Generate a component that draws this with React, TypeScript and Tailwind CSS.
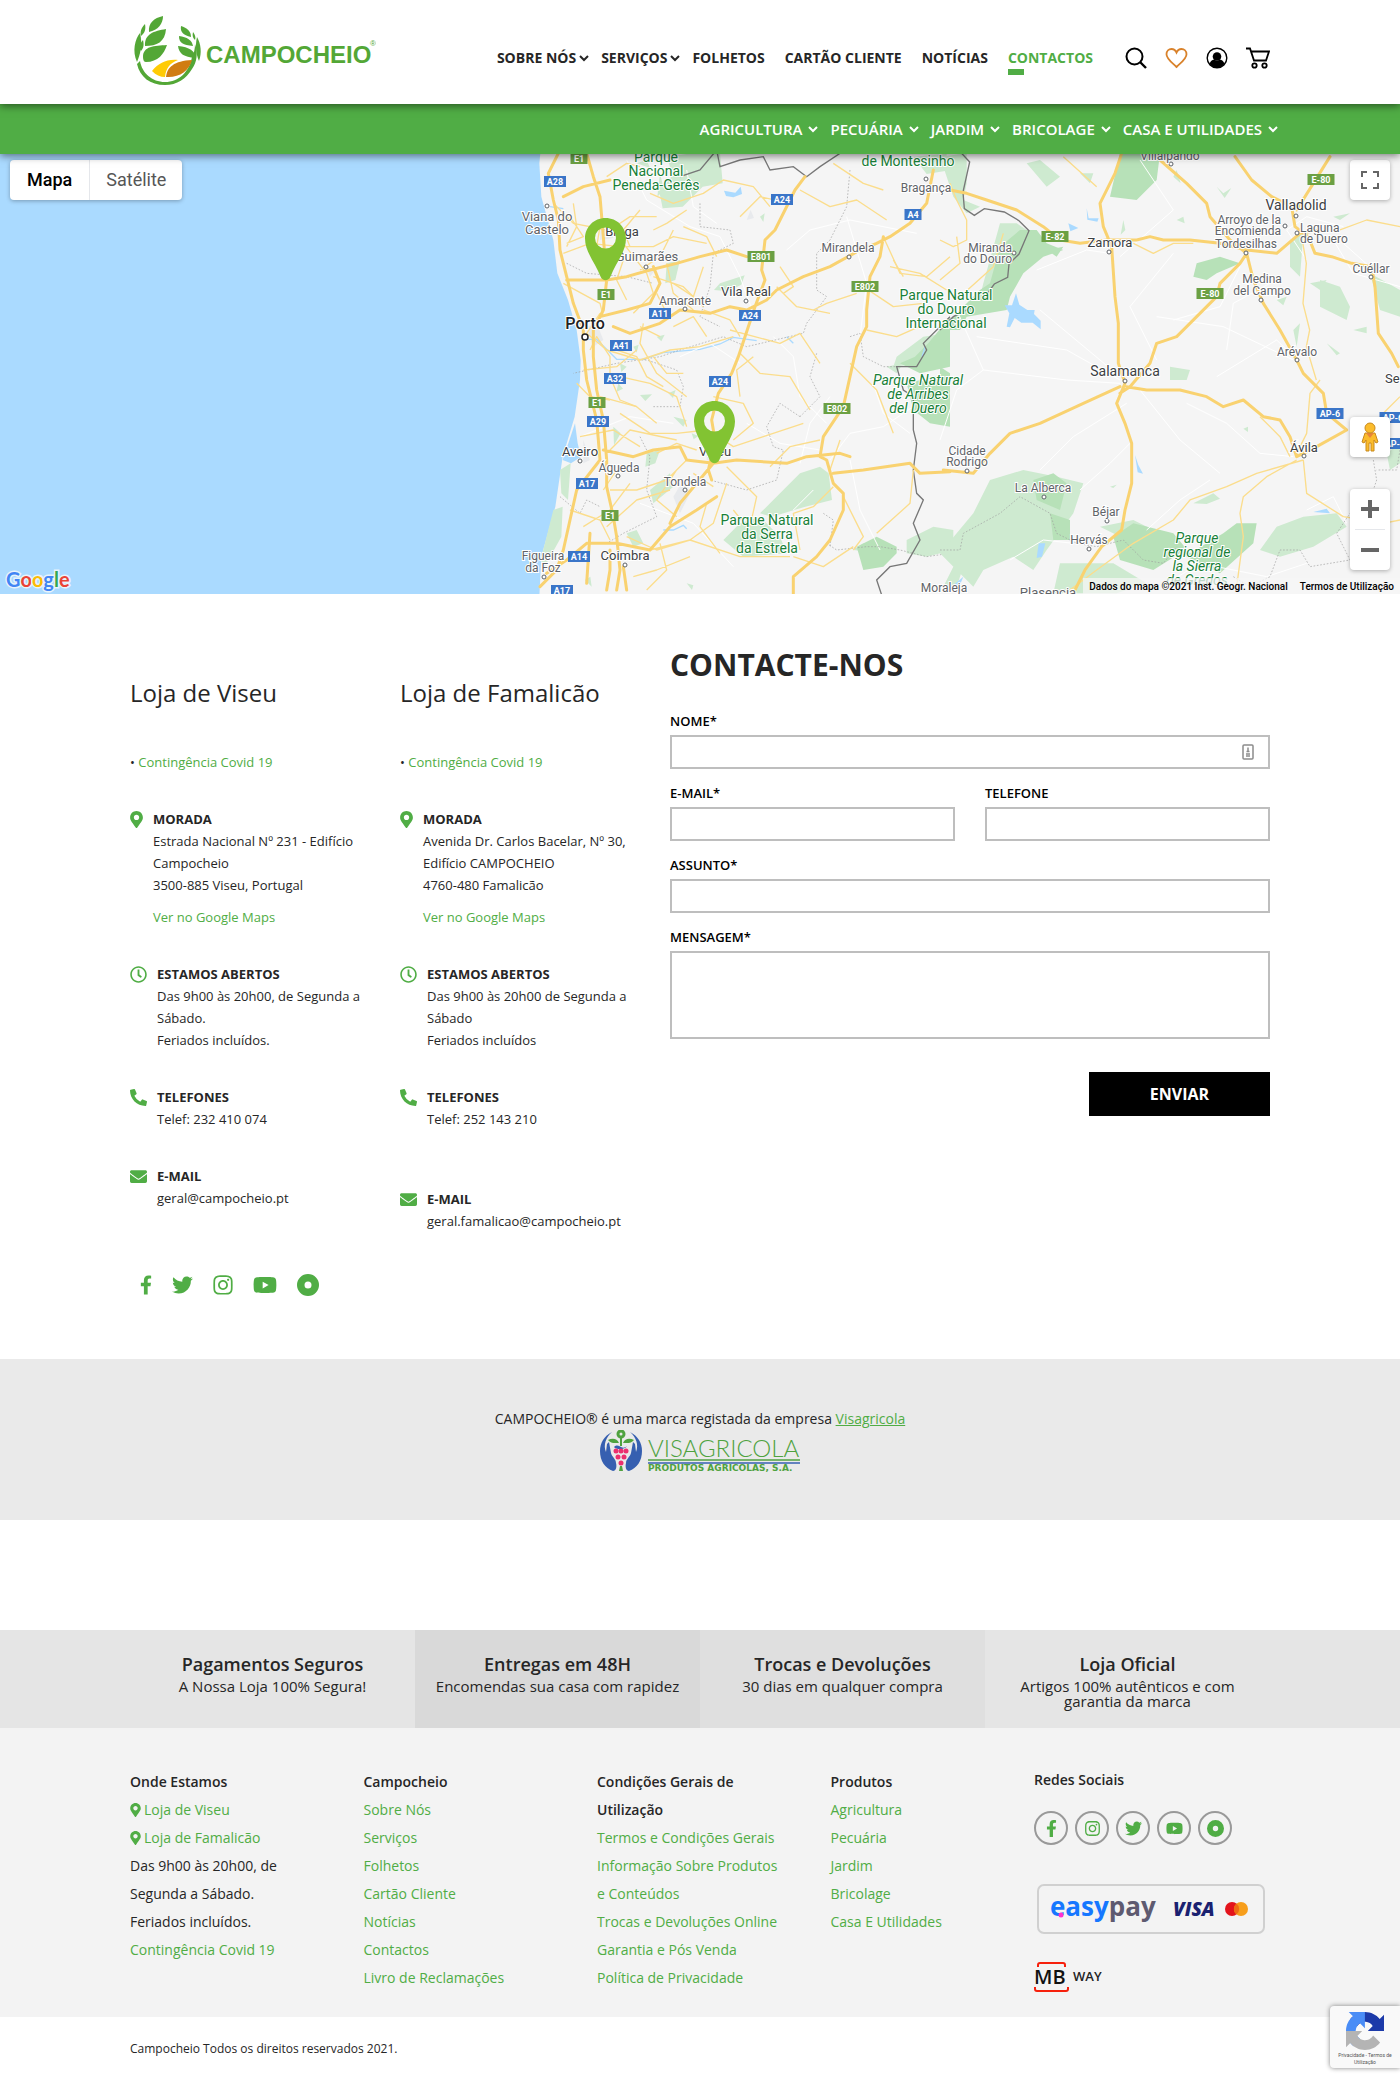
import { useState } from "react";
import type { ReactNode } from "react";
import {
    FaEnvelope,
    FaFacebookF,
    FaInstagram,
    FaMapMarkerAlt,
    FaPhoneAlt,
    FaRegClock,
    FaTwitter,
    FaYoutube,
} from "react-icons/fa";

const mainNav = [
    { label: "SOBRE NÓS", menu: true },
    { label: "SERVIÇOS", menu: true },
    { label: "FOLHETOS" },
    { label: "CARTÃO CLIENTE" },
    { label: "NOTÍCIAS" },
    { label: "CONTACTOS", active: true },
];

const categories = ["AGRICULTURA", "PECUÁRIA", "JARDIM", "BRICOLAGE", "CASA E UTILIDADES"];

function Chevron() {
    return (
        <svg width="10" height="7" viewBox="0 0 10 7" fill="none" stroke="currentColor" strokeWidth="2" aria-hidden="true">
            <path d="M1 1l4 4 4-4" />
        </svg>
    );
}

function Logo() {
    return (
        <svg width="246" height="74" viewBox="0 0 246 74" role="img" aria-label="Campocheio">
            <g fill="#53a736">
                <path d="M10 49c2 12 12 21 25 21 14 0 24-10 27-25 2-4 3-8 3-13 3 9 2 18-3 25-6 10-15 16-27 16C20 73 10 65 7 52z" />
                <path d="M33 4c-9 2-15 7-14 16 9-2 14-8 14-16z" />
                <path d="M36 17c-12 2-22 5-21 17 12 0 20-4 21-17z" />
                <path d="M37 33c-13 1-24 1-24 12 0 3 1 5 3 5 12 0 18-8 21-17z" />
                <path d="M15 12c-4 4-5 8-4 12 4-3 5-7 4-12zM10 21c-5 6-8 18-3 29 3-7 6-17 3-29zM13 28c-3 3-3 7-2 11 3-3 3-7 2-11z" />
                <path d="M51 14c-1 6 2 9 10 11 0-6-4-9-10-11z" />
                <path d="M49 24c0 7 4 9 14 10-1-6-6-9-14-10z" />
                <path d="M48 34c1 8 6 11 17 12 1-7-6-11-17-12z" />
                <path d="M63 20c2 3 3 5 2 8-2-2-3-4-2-8zM67 25c4 7 5 16 2 24-3-7-4-15-2-24z" />
            </g>
            <path d="M22 59c7-8 14-12 26-11-8 3-12 8-13 17-5 0-9-2-13-6z" fill="#ffcb05" />
            <path d="M36 65c1-10 8-16 26-17-3 11-13 18-26 17z" fill="#d07c12" />
            <text x="76" y="51" fontFamily="Liberation Sans, Arial, sans-serif" fontWeight="700" fontSize="24" fill="#53a736">
                CAMPOCHEIO
            </text>
            <text x="240" y="34" fontFamily="Liberation Sans, Arial, sans-serif" fontSize="8" fill="#53a736">
                ®
            </text>
        </svg>
    );
}

function SiteHeader() {
    return (
        <header className="relative z-20">
            <div className="relative z-10 bg-white shadow-[0_2px_8px_rgba(0,0,0,0.5)]">
                <div className="mx-auto flex h-[104px] max-w-[1140px] items-center justify-between">
                    <a href="#" className="pb-1.5">
                        <Logo />
                    </a>
                    <div className="flex items-center gap-8 pt-3">
                        <nav className="flex gap-5 text-sm leading-5 font-bold">
                            {mainNav.map((item) => (
                                <a
                                    key={item.label}
                                    href="#"
                                    className={
                                        item.active
                                            ? "relative text-[#50ad45] after:absolute after:top-[21px] after:left-0 after:h-1.5 after:w-4 after:bg-[#50ad45]"
                                            : item.menu
                                              ? "-mr-2 flex items-center gap-[3px]"
                                              : ""
                                    }
                                >
                                    {item.label}
                                    {item.menu && <Chevron />}
                                </a>
                            ))}
                        </nav>
                        <div className="flex items-center gap-[18px] text-black">
                            <button type="button" aria-label="Pesquisar">
                                <svg width="22" height="22" viewBox="0 0 22 22" fill="none" stroke="currentColor" strokeWidth="2">
                                    <circle cx="9.5" cy="9.5" r="8" />
                                    <path d="M15 15l6 6" strokeWidth="2.4" />
                                </svg>
                            </button>
                            <a href="#" aria-label="Favoritos">
                                <svg width="23" height="22" viewBox="0 0 23 22" fill="none" stroke="#d9822b" strokeWidth="1.8">
                                    <path d="M11.5 20C7 15.500 1.500 12 1.500 7.300 1.500 4 3.800 2 6.500 2c2.300 0 4 1.300 5 3.600C12.500 3.300 14.200 2 16.500 2c2.700 0 5 2 5 5.300 0 4.700-5.500 8.200-10 12.700z" />
                                </svg>
                            </a>
                            <a href="#" aria-label="Conta">
                                <svg width="22" height="22" viewBox="0 0 22 22">
                                    <circle cx="11" cy="11" r="9.800" fill="none" stroke="currentColor" strokeWidth="1.400" />
                                    <circle cx="11" cy="9.500" r="4.300" fill="currentColor" />
                                    <path d="M3.500 17c1-3 2.500-4 4.500-4.500 2 1.500 4 1.500 6 0 2 .5 3.500 1.500 4.500 4.500-4 5-11 5-15 0z" fill="currentColor" />
                                </svg>
                            </a>
                            <a href="#" aria-label="Carrinho">
                                <svg width="24" height="22" viewBox="0 0 24 22" fill="none" stroke="currentColor" strokeWidth="1.800">
                                    <path d="M0 1.500h4l4 12h12l3-9H5" />
                                    <circle cx="8.500" cy="18.500" r="2.200" />
                                    <circle cx="18.500" cy="18.500" r="2.200" />
                                </svg>
                            </a>
                        </div>
                    </div>
                </div>
            </div>
            <div className="bg-[#50ad45] shadow-[0_2px_8px_rgba(0,0,0,0.5)]">
                <nav className="mx-auto flex h-[50px] max-w-[1140px] items-center justify-end text-[15px] font-semibold text-white">
                    <div className="-mr-2 flex gap-3">
                        {categories.map((label) => (
                            <a key={label} href="#" className="flex items-center gap-1.5">
                                {label}
                                <Chevron />
                            </a>
                        ))}
                    </div>
                </nav>
            </div>
        </header>
    );
}

type Label = {
    x: number;
    y: number;
    lines: string[];
    size: number;
    step?: number;
    color?: string;
    anchor?: "start" | "middle" | "end";
    italic?: boolean;
    weight?: number;
};

const park = "#188038";
const town = "#5f6368";

const mapLabels: Label[] = [
    { x: 656, y: 8, lines: ["Parque", "Nacional", "Peneda-Gerês"], size: 14, step: 14, color: park },
    { x: 908, y: 12, lines: ["de Montesinho"], size: 14, color: park },
    { x: 946, y: 146, lines: ["Parque Natural", "do Douro", "Internacional"], size: 14, step: 14, color: park },
    { x: 918, y: 231, lines: ["Parque Natural", "de Arribes", "del Duero"], size: 14, step: 14, color: park, italic: true },
    { x: 767, y: 371, lines: ["Parque Natural", "da Serra", "da Estrela"], size: 14, step: 14, color: park },
    { x: 1197, y: 389, lines: ["Parque", "regional de", "la Sierra", "de Gredos"], size: 14, step: 14, color: park, italic: true },
    { x: 926, y: 38, lines: ["Bragança"], size: 12, color: town },
    { x: 547, y: 67, lines: ["Viana do", "Castelo"], size: 13, step: 13, color: town },
    { x: 622, y: 82, lines: ["Braga"], size: 13 },
    { x: 647, y: 107, lines: ["Guimarães"], size: 13, color: town },
    { x: 685, y: 151, lines: ["Amarante"], size: 12, color: town },
    { x: 746, y: 142, lines: ["Vila Real"], size: 13 },
    { x: 585, y: 175, lines: ["Porto"], size: 16, color: "#202124", weight: 500 },
    { x: 848, y: 98, lines: ["Mirandela"], size: 12, color: town },
    { x: 715, y: 302, lines: ["Viseu"], size: 13 },
    { x: 580, y: 302, lines: ["Aveiro"], size: 13 },
    { x: 619, y: 318, lines: ["Águeda"], size: 12, color: town },
    { x: 685, y: 332, lines: ["Tondela"], size: 12, color: town },
    { x: 543, y: 406, lines: ["Figueira", "da Foz"], size: 12, step: 12, color: town },
    { x: 625, y: 406, lines: ["Coimbra"], size: 13 },
    { x: 944, y: 438, lines: ["Moraleja"], size: 12, color: town },
    { x: 1170, y: 6, lines: ["Villalpando"], size: 12, color: town },
    { x: 1296, y: 56, lines: ["Valladolid"], size: 14 },
    { x: 1281, y: 70, lines: ["Arroyo de la", "Encomienda"], size: 12, step: 11, color: town, anchor: "end" },
    { x: 1300, y: 78, lines: ["Laguna", "de Duero"], size: 12, step: 11, color: town, anchor: "start" },
    { x: 1246, y: 94, lines: ["Tordesilhas"], size: 12, color: town },
    { x: 1110, y: 93, lines: ["Zamora"], size: 13 },
    { x: 1012, y: 98, lines: ["Miranda", "do Douro"], size: 12, step: 11, color: town, anchor: "end" },
    { x: 1371, y: 119, lines: ["Cuéllar"], size: 12, color: town },
    { x: 1262, y: 129, lines: ["Medina", "del Campo"], size: 12, step: 12, color: town },
    { x: 1297, y: 202, lines: ["Arévalo"], size: 12, color: town },
    { x: 1125, y: 222, lines: ["Salamanca"], size: 14 },
    { x: 1385, y: 229, lines: ["Se"], size: 13, anchor: "start" },
    { x: 1304, y: 298, lines: ["Ávila"], size: 13 },
    { x: 967, y: 301, lines: ["Cidade", "Rodrigo"], size: 12, step: 11, color: town },
    { x: 1043, y: 338, lines: ["La Alberca"], size: 12, color: town },
    { x: 1106, y: 362, lines: ["Béjar"], size: 12, color: town },
    { x: 1089, y: 390, lines: ["Hervás"], size: 12, color: town },
    { x: 1048, y: 443, lines: ["Plasencia"], size: 13, color: town },
];

const mapTowns = [
    [926, 25], [547, 52], [646, 113], [685, 155], [746, 147], [849, 103], [580, 307], [618, 322],
    [685, 336], [544, 423], [625, 411], [1171, 10], [1296, 62], [1285, 72], [1297, 79], [1246, 99],
    [1109, 98], [1014, 99], [1371, 123], [1261, 146], [1297, 206], [1125, 227], [1304, 302],
    [967, 317], [1044, 343], [1107, 367], [1089, 395],
];

const shields = [
    { x: 555, y: 27, t: "A28" }, { x: 782, y: 45, t: "A24" }, { x: 913, y: 60, t: "A4" },
    { x: 750, y: 161, t: "A24" }, { x: 660, y: 159, t: "A11" }, { x: 621, y: 191, t: "A41" },
    { x: 615, y: 224, t: "A32" }, { x: 720, y: 227, t: "A24" }, { x: 598, y: 267, t: "A29" },
    { x: 587, y: 329, t: "A17" }, { x: 579, y: 402, t: "A14" }, { x: 562, y: 436, t: "A17" },
    { x: 1330, y: 259, t: "AP-6" }, { x: 1393, y: 263, t: "AP-6" }, { x: 1395, y: 289, t: "AP-6" },
    { x: 579, y: 4, t: "E1", green: true }, { x: 606, y: 140, t: "E1", green: true },
    { x: 597, y: 248, t: "E1", green: true }, { x: 610, y: 361, t: "E1", green: true },
    { x: 761, y: 102, t: "E801", green: true }, { x: 865, y: 132, t: "E802", green: true },
    { x: 837, y: 254, t: "E802", green: true }, { x: 1321, y: 25, t: "E-80", green: true },
    { x: 1055, y: 82, t: "E-82", green: true }, { x: 1210, y: 139, t: "E-80", green: true },
];

// West and east halves are drawn on 3x grids with their own origins.
function MapTerrain() {
    return (
        <>
            <g transform="translate(500 -4) scale(.33333)">
                <path d="M-1500 0H122l-4 40 6 100 36 130 12 100 32 80 26 90 12 90-2 60-16 110-36 120-22 150-42 150-6 120H-1500z" fill="#aadaff" />
                <path d="M205 880l20-60 8 60 10 40-30 20-25-10z" fill="#aadaff" />
                <path d="M672 122l34 6 16-18 4 22-26 10-22-4z" fill="#aadaff" />
                <g fill="#ceead0">
                    <path d="M500 20l60-8 100-2 8 90-60 10-60 60-60 5-10-50 40-50z" />
                    <path d="M660 400l74-24-10 28-40 20-42-4zM500 340l40-10-14 60-30 10zM410 40l30-10 10 24zM180 960l32-20-8 110-20-20z" />
                    <path d="M160 1080l28-10-4 90-50 90-12-20zM780 1090l120-120 60-20 26 20 10 80-80 20-100 30zM720 1120l60-20 60 60 20 50-130 10-60-50z" />
                    <path d="M440 910l40-10-14 40-30 10zM450 1020l60-50 10 40-60 50zM340 830l22 20-20 36zM420 735l36-2-20 20zM520 800l40 10-10 20zM1190 620l80-60 70-10 10 70-80 20-90 10zM1160 650l50-10-20 30z" />
                    <path d="M1220 1170l80-40 60 10v60l-80 20-60-10zM1060 1200l30-20 60 30zM380 1150l30-10 20 40-30 10zM255 1290l16-10 4 30zM560 1300l20 6-4 14z" />
                    <path d="M400 590l16-6-6 24zM470 560l24-6-10 20zM360 640l20 10-16 16zM780 200l14-10-4 26zM575 850l20 8-14 10zM355 700l14 16-20 10zM505 730l22-10-8 24zM1240 20l100-8 0 50-60 10zM480 70l12 50-20 20z" />
                </g>
                <g fill="#b7e1b8">
                    <path d="M1245 620l40-40 65-80v150l-90 20-60-30zM1220 700l130-30v160l-60-10-50-40zM1070 1190l60-30 60 30v20l-40 40-60 10z" />
                </g>
                <g fill="#e8eaed">
                    <path d="M260 530l30-10 20 50-30 20zM520 1040l30-50 20 40-30 60zM250 870l20 60-20 10zM440 350l26 10-16 20zM300 240l30-6 10 30-40 6zM620 900l40-4-10 40-30-6zM740 210l12-30 10 24z" />
                </g>
                <g fill="none" stroke="#aadaff" strokeWidth="4">
                    <path d="M250 568l40 0 60 60 80 0 60-20 110-10 60-16 40-20 70 10M490 1140l30 0 30-14 10 10M860 560l20 20M1266 620l10-30M150 170l40 6" />
                </g>
                <g fill="none" stroke="#fff" strokeWidth="3">
                    <path d="M380 30l60 120 130 80 90 30 60 120 40 110M860 300l70-60 120-30 200 40M820 560l60 60 20 120 80 80M740 820l100 60 120 20M240 860l150-60 130 20M1040 200l60 200-20 160M900 940l30-120 60-80M420 1060l160 60 120 130M1050 930l30 150 60 120M540 620l90-40 90 60M1240 770l-90 60-100 20-60 80M1120 700l30 90 80 60M560 60l20 110 70 50M880 1080l60-60" />
                </g>
                <g fill="none" stroke="#9e9e9e" strokeWidth="2" strokeDasharray="5 5">
                    <path d="M600 160v70l90 10 10 40-60 30-10 100-30 90 60 30M1050 60l-10 110-50 100-40 40v110l30 20-60 80-10 30-170 40-70-30-130 40-60 20-130 20-130 30M1050 560l30-10 10 70 60 30 40 0M200 340l60 30 120 10 80 20M460 770l80 0 10-60-20-50-90-30-30 0M900 800l-60-40-40 70 20 60 30 10-20 90-90 30-110-30M420 860l30 60-10 100 30 80-100 50-50 30M900 800l60-60-30-60 20-70M180 1040l60 50 20-40 40 20M980 1180l30 20 90-10 40 0 60 10 80 20 70-10M970 1090l30 20-10 80" />
                </g>
                <path d="M540 80l60-20 50-60 10 50 60-20 70-10 20 40 70-10 40 30 40-30 60-40 20-20M1350 500l-80 80 10 20-30 50-60 0 20 70 30 20 0 100 10 40-10 80 10 70 20 20-30 70 20 50-40 70-50 10-40 40 20 60 50 40" fill="none" stroke="#777" strokeWidth="4" />
                <g fill="none" stroke="#fbdd8c" strokeWidth="4" strokeLinejoin="round">
                    <path d="M160 160l60 60 100 20M190 310l80-30 90 10 100 0 60-30 100 20M450 130l70 30 90-30 60-40 90 20 50 60M300 230l-10 60 20 100M190 400l110 60 10 40M300 490l-40 60 60 50 100 30 90-30 90-10 100-30M370 280l70 90 20 60-60 60M460 380l90 30 60 60M500 340l20 90 60 50M610 480l80 30 30 50M720 610l60 60 90 10 60 100M690 540l150 40 60-30 60 90M900 120l90 50 80-20 90 60M1150 260l50 110 80 10 70-60M1090 410l90 60 90-10M1100 540l90 20 90-40M1050 640l80 80 50 130M640 740l90 20 30 60-60 50M640 850l60 40 90-30 120-40M360 790l90 60 80 0 90-10M330 900l60-60 140 30M300 740l110 30 60 50M530 960l-60 90 60 50M560 930l-60 60-90 30-80 0M680 950l90 90-20 90M640 1010l-60-40M680 1000l-40 120-70 50-120 30M320 1130l90-80 100-30M380 1160l90 40 100-30 150 50 150 0M430 520l-10 60 50 90 90 70M240 860l100-20 80 50M250 1130l80-50 60-80M1000 1010l-60 60-60 20 20 110M1030 1040l60 120-30 40M1240 960l-10 100-100 90M1150 120l-60-20-90-60M870 160l-90-20-60 60M520 240l-40 80-60 40M960 870l-90 20-60 60M1340 420l-80-50-90-20M560 830l-30-90-80-40-90-20M210 1080l90 30 30 60M880 1220l90 30 90-60" />
                    <path d="M200 290l30-60-10-70M330 240l60-40 80 0M370 330l-20 60 30 60M470 430l30 60M520 400l60 40 30-90M270 600l20-40 40 60 0 60 30 70 50 20M250 660l100-10 60-50M350 600l60 20 30 60 50 30M460 620l40 50 50 0M560 180l-60 40-40 20M650 320l-30-60-70-30M830 410l60 60 100 20M940 480l40-20 90-30M760 620l-50 40 10 80M840 350l40 60-30 20M1180 330l30 50M990 960l30-90M420 180l-50 60 20 50M320 80l60-40 40 10M210 200l40 60-50 20M620 560l-40-60-60 30M480 560l-60-30M230 700l40 40 60 10M350 960l-40 60M590 900l-60-20-60 30M700 1080l40 50M620 1060l-20 70 60 80M480 1180l20 80-60 60M400 1280l70-20 100-40" />
                </g>
                <g fill="none" stroke="#f9d270" strokeWidth="9" strokeLinejoin="round" strokeLinecap="round">
                    <path d="M175 10l-30 60 15 80 15 60 5 90 20 80 20 80 30 80 0 60 10 90 30 120 10 120-70 90-20 90-20 90-20 60-50 50M260 10l20 70 20 60 10 120 10 130-10 90-30 60 0 80 10 100 20 90 10 120 0 80 20 90 10 60 10 100-10 60M190 140l60-30 80-20M200 390l60 0 60 0 60-10 70-20 80-20 70-20 80-20 60 20M300 500l80-20 70-20 30-60-20-50M340 530l50 20 90-30 60-40 90 10 60-20 50 10 60-30 30-30 80-40 80-30 90-50 50-20 40-20 60-40 50-60 20-100M915 80l-30 40-30 60-30 60-30 30-10 90 10 30-30 80-20 60-30 90-20 50-40 60-20 80 10 60-20 90 10 30M1150 260l-10 60-30 60-10 100 0 50-30 60-20 90-20 90-60 90-10 60 20 10 20 70 30 30 0 50-40 90-40 50-70 60 0 100M310 900l90 20 60-20 80-10 20 40 80 10 70-10 150 10 60-20 100-10 30 10M1000 970l90-10 140-20 30 30 90-5M640 940l-50 60-50 60-30 60M650 1040l-60 40-80 50-60 70-100-20-90 0-60 50-60 40M330 1200l0 60-10 60M270 1150l-10 150M370 1250l10 70" />
                </g>
            </g>
            <g transform="translate(940 -4) scale(.33333)">
                <g fill="#ceead0">
                    <path d="M0 20l80-10 0 90-10 50 50 20-40 20-40-50zM260 40l40-10 60 50-40 30zM130 400l50-180 50 0 30 20-40 180-100 20zM420 70l40 0-10 30zM830 110l20 20 24-16-20 30zM1140 390l60 20 30 60-10 40-80-40zM1050 270l40-20-10 130-30-30zM1290 370l90 50v80l-60-20zM1110 400l50-10-20 30zM1060 540l20-20-10 70z" />
                    <path d="M0 1210l100-120 50-100 100-30 100 20 80 20-30 90-80 110-40 60-60-40-90 40-30 50zM1010 1130l80-30 100-10 30 40-100 60-100 30-60-20zM480 1130l100-20 60 30-60 40zM690 650l60 10-10 30-50 0zM760 1060l60-30 20 16-40 16zM1340 910l40-30v60l-30 20zM360 1240l160 0 100 60-90 30H340z" />
                    <path d="M700 80l10-20 12 40zM710 210l20-10 4 20zM1010 450l30-10-10 26zM1240 540l40-10 0 20zM1160 580l40 30-10 6zM910 836l14-6 0 16zM1180 200l50-10-30 20zM160 1000l20-10 10 16zM510 1010l20-6-10 10zM550 210l6 30-14 14zM40 1250l30 0-20 60-40 0z" />
                </g>
                <g fill="#b7e1b8">
                    <path d="M540 10h120l-10 80-60 60-80-10zM0 540l60-60 60-60 30-20 30-110 60-50 50 0 30 40 50 20-60 20-60 50-40 70-10 40-120 20-20 40zM320 300l50-10-20 30zM770 340l70-20 60 20-70 30-30 20-40-10zM520 1160l60-40 120 30 50 60 100-60 40-30 60 0-10 60-100 90-120-60-80 50-100-30zM0 650l30 20 0 60-30 80zM280 990l60-20 40 30-20 80-70-30zM330 1090l60 20 0 60-50 0z" />
                </g>
                <g fill="#aadaff">
                    <path d="M228 430l10 34 24 16 22 0-2 12 20 20 0 26-24-20-34 0-20-14-14 28-10-2 8-40-14-24 22 0zM440 175l6 30 30 0-4 10-30-6zM385 220l30 14-24 10zM296 1180l20 0-10 40-16 4zM585 915l10 30 14 26-16-4zM1120 1086l40-10 10 14zM70 1280l-10 24-30 10z" />
                </g>
                <g fill="none" stroke="#fff" strokeWidth="3">
                    <path d="M130 660l-80-180M130 660l250 30 160 10M130 660l-80 60-50 150M110 560l270 40 160 90M290 360l150-60 70 10M300 480l240 200M700 310l-130 160 80 160M540 320l160-140-100-150M650 500l200 30 210 100M740 760l120 60 100 90 100 10M600 720l120 150 120 100M560 760l-160 100-100 100M830 680l180-110 60 60M1180 270l60 100 140 40M1100 330l-60-90 60-40 110 30M900 350l-60 120-140 40M420 1020l90-80 60-60M620 1140l100-90 90-60M1100 1080l80-40 40 80M990 400l-110 60-20 140M210 1230l100-60 90 10M1210 280l90 80M680 1300l100-60 200 40 120-40" />
                </g>
                <g fill="none" stroke="#9e9e9e" strokeWidth="2" strokeDasharray="5 5">
                    <path d="M0 1200l60 0 10-50 110-60 60-50 90 50 20 60 60 30 60 10 80-20 60 60 60 10 40-50M880 1280l50 30 60-30 30-80 60 0 30 50 60-10 60-10-40-80 40-60M1300 930l10 60-30 90M1380 900l-10 60-60 0" />
                </g>
                <path d="M65 10l24 26-20 90 4 50 30 20 30-20 60 10 44 26 30 30-30 70-30 30-4 40-40 20-30 40M100 470l-60 30-40 40" fill="none" stroke="#777" strokeWidth="4" />
                <g fill="none" stroke="#fbdd8c" strokeWidth="4" strokeLinejoin="round">
                    <path d="M0 270l40 20 40-20 0-60-30-60-20-50M0 390l60-50-10-80M60 440l100-90 30-100M1085 260l14 80-10 120 20 80-10 50 30 100M1140 690l-30 40-10 120-30 60M1090 930l-140 40-90 40-110 40-50 60-120 70-110 80-120 90M1070 930l-90 50-70 60-10 50 10 70-20 150M1090 930l10 100 110 70 120 20 50-10M1200 240l80-30 100 20M370 20l100 90M580 280l60 30 60-30 60 0M960 800l60 60 30 60M1330 790l50-50" />
                </g>
                <g fill="none" stroke="#f9d270" strokeWidth="9" strokeLinejoin="round" strokeLinecap="round">
                    <path d="M30 120l50 10 60 20 90 30 80 50 50 40 60 10 80-10 90 0 40-10 40 10 80 0 90 10 80 20 90 10 70-60 60-10M545 10l-20 60-45 90 10 70 25 60 10 150 10 80 0 120 20 60-25 60 25 60 20 60 0 120-20 80-10 60-60 50-50 70-60 120M660 30l80 70 60 60 10 40 60 70 50 40-20 30-60 60-10 40-60 60-60 60-60 20-20 60-60 70-30 20M885 20l50 70 60 50 60 30 10 60 40 30 20 50 50 10 60 20 60 10 10 60 10 140 40 60 20 40M1170 20l-50 80-50 80M920 310l20 80 30 70 50 80 50 90 20 40 60 60 10 60 60 50-90 50-60 30M1070 920l-20-60-30-50-50-10-60-50-60 20-50-30-80-20-100 0-60-10M540 710l-110 50-130 60-90 30-60 60-50 60-90-10" />
                </g>
            </g>
        </>
    );
}

function MapPin({ x, y }: { x: number; y: number }) {
    return (
        <path
            transform={`translate(${x} ${y})`}
            d="M20.500 0C9 0 0 9 0 20.500c0 13 10 24 15.500 38 2 5 8 5 10 0 5.500-14 15.500-25 15.500-38C41 9 32 0 20.500 0zm0 9.500a10.500 10.500 0 1 1 0 21 10.500 10.500 0 0 1 0-21z"
            fill="#82c332"
            fillRule="evenodd"
        />
    );
}

function StoreMap() {
    const [view, setView] = useState("mapa");

    return (
        <section className="relative h-[440px] overflow-hidden bg-[#f5f5f5] font-[Roboto,sans-serif]" aria-label="Mapa das lojas">
            <svg className="h-full w-full" viewBox="0 0 1400 440" preserveAspectRatio="xMidYMid slice">
                <MapTerrain />
                {mapTowns.map(([x, y]) => (
                    <circle key={`${x}-${y}`} cx={x} cy={y} r="2" fill="#fff" stroke="#5f6368" strokeWidth="1" />
                ))}
                <circle cx="585" cy="183" r="3" fill="#fff" stroke="#202124" strokeWidth="1.500" />
                {shields.map((s) => {
                    const w = s.t.length * 5 + 7;
                    return (
                        <g key={`${s.t}-${s.x}-${s.y}`}>
                            <rect x={s.x - w / 2} y={s.y - 5} width={w} height="11" fill={s.green ? "#6ba043" : "#3a75c8"} />
                            <text x={s.x} y={s.y + 4} textAnchor="middle" fontSize="9" fontWeight="700" fill="#fff">
                                {s.t}
                            </text>
                        </g>
                    );
                })}
                {mapLabels.map((l) => (
                    <text
                        key={`${l.lines[0]}-${l.x}`}
                        textAnchor={l.anchor ?? "middle"}
                        fontSize={l.size}
                        fontStyle={l.italic ? "italic" : "normal"}
                        fontWeight={l.weight ?? 400}
                        fill={l.color ?? "#3c4043"}
                        stroke="#fff"
                        strokeWidth="2"
                        paintOrder="stroke"
                    >
                        {l.lines.map((line, i) => (
                            <tspan key={line} x={l.x} y={l.y + i * (l.step ?? 0)}>
                                {line}
                            </tspan>
                        ))}
                    </text>
                ))}
                <MapPin x={585} y={64} />
                <MapPin x={694} y={247} />
            </svg>

            <div className="absolute top-1.5 left-2.5 flex h-10 rounded-sm bg-white text-lg shadow-[0_1px_4px_rgba(0,0,0,0.3)]">
                <button
                    type="button"
                    onClick={() => setView("mapa")}
                    className={view === "mapa" ? "px-[17px] font-medium text-black" : "px-[17px] text-[#565656]"}
                >
                    Mapa
                </button>
                <button
                    type="button"
                    onClick={() => setView("satelite")}
                    className={
                        view === "satelite"
                            ? "border-l border-gray-200 px-4 font-medium text-black"
                            : "border-l border-gray-200 px-4 text-[#565656]"
                    }
                >
                    Satélite
                </button>
            </div>

            <button
                type="button"
                aria-label="Ecrã inteiro"
                className="absolute top-1.5 right-2.5 flex size-10 items-center justify-center rounded-sm bg-white shadow-[0_1px_4px_rgba(0,0,0,0.3)]"
            >
                <svg width="18" height="18" viewBox="0 0 18 18" fill="none" stroke="#666" strokeWidth="2">
                    <path d="M1 6V1h5M12 1h5v5M17 12v5h-5M6 17H1v-5" />
                </svg>
            </button>
            <button
                type="button"
                aria-label="Street View"
                className="absolute right-2.5 bottom-[137px] flex size-10 items-center justify-center rounded-sm bg-white shadow-[0_1px_4px_rgba(0,0,0,0.3)]"
            >
                <svg width="18" height="30" viewBox="0 0 18 30" fill="#fbbc2c" stroke="#c98a1c" strokeWidth="1">
                    <path d="M4 11h10l3 9-2 1-2-3v11h-3v-8H8v8H5V18l-2 3-2-1z" />
                    <path d="M5 11h8l-4 5z" fill="#e8843c" stroke="none" />
                    <circle cx="9" cy="6" r="5" />
                </svg>
            </button>
            <div className="absolute right-2.5 bottom-6 flex w-10 flex-col rounded-sm bg-white px-[5px] shadow-[0_1px_4px_rgba(0,0,0,0.3)]">
                <button type="button" aria-label="Aumentar zoom" className="flex h-[41px] items-center justify-center border-b border-gray-200">
                    <svg width="18" height="18" viewBox="0 0 18 18" stroke="#666" strokeWidth="4">
                        <path d="M9 0v18M0 9h18" />
                    </svg>
                </button>
                <button type="button" aria-label="Diminuir zoom" className="flex h-10 items-center justify-center">
                    <svg width="18" height="18" viewBox="0 0 18 18" stroke="#666" strokeWidth="4">
                        <path d="M0 9h18" />
                    </svg>
                </button>
            </div>

            <svg className="absolute bottom-0 left-1 h-7 w-[70px]" viewBox="0 0 70 28" role="img" aria-label="Google">
                <text x="2" y="21" fontFamily="Lato, sans-serif" fontSize="20" fontWeight="700" stroke="#e8f3fb" strokeWidth="3" paintOrder="stroke">
                    <tspan fill="#4285f4">G</tspan>
                    <tspan fill="#ea4335">o</tspan>
                    <tspan fill="#fbbc05">o</tspan>
                    <tspan fill="#4285f4">g</tspan>
                    <tspan fill="#34a853">l</tspan>
                    <tspan fill="#ea4335">e</tspan>
                </text>
            </svg>
            <div className="absolute right-0 bottom-0 flex h-4 items-center gap-3 bg-[#f5f5f5]/75 px-1.5 text-[10px] font-medium text-black">
                <span>Dados do mapa ©2021 Inst. Geogr. Nacional</span>
                <a href="#">Termos de Utilização</a>
            </div>
        </section>
    );
}

function Disc({ className }: { className: string }) {
    return (
        <svg viewBox="0 0 22 22" className={className} fill="currentColor" aria-hidden="true">
            <path d="M11 0a11 11 0 1 0 0 22 11 11 0 0 0 0-22zm0 7.500a3.500 3.500 0 1 1 0 7 3.500 3.500 0 0 1 0-7z" fillRule="evenodd" />
        </svg>
    );
}

function InfoBlock({ icon, title, children }: { icon: ReactNode; title: string; children: ReactNode }) {
    return (
        <div className="flex gap-2.5">
            <div className="pt-[3px] text-[17px] text-[#50ad45]">{icon}</div>
            <div>
                <h3 className="font-bold">{title}</h3>
                {children}
            </div>
        </div>
    );
}

type Store = { name: string; address: string[]; hours: string[]; phone: string; email: string };

const stores: Store[] = [
    {
        name: "Loja de Viseu",
        address: ["Estrada Nacional Nº 231 - Edifício Campocheio", "3500-885 Viseu, Portugal"],
        hours: ["Das 9h00 às 20h00, de Segunda a Sábado.", "Feriados incluídos."],
        phone: "232 410 074",
        email: "geral@campocheio.pt",
    },
    {
        name: "Loja de Famalicão",
        address: ["Avenida Dr. Carlos Bacelar, Nº 30, Edifício CAMPOCHEIO", "4760-480 Famalicão"],
        hours: ["Das 9h00 às 20h00 de Segunda a Sábado", "Feriados incluídos"],
        phone: "252 143 210",
        email: "geral.famalicao@campocheio.pt",
    },
];

function StoreInfo({ store, spaced, children }: { store: Store; spaced?: boolean; children?: ReactNode }) {
    return (
        <div className="pt-[31px] pr-8 text-[13px] leading-[22px]">
            <h2 className="text-2xl leading-8">{store.name}</h2>
            <p className="mt-[42px]">
                • <a href="#" className="text-[#50ad45]">Contingência Covid 19</a>
            </p>
            <div className="mt-[35px] flex flex-col gap-[35px]">
                <InfoBlock icon={<FaMapMarkerAlt className="w-[13px]" />} title="MORADA">
                    {store.address.map((line) => (
                        <p key={line}>{line}</p>
                    ))}
                    <a href="#" className="mt-2.5 block text-[#50ad45]">Ver no Google Maps</a>
                </InfoBlock>
                <InfoBlock icon={<FaRegClock />} title="ESTAMOS ABERTOS">
                    {store.hours.map((line) => (
                        <p key={line}>{line}</p>
                    ))}
                </InfoBlock>
                <InfoBlock icon={<FaPhoneAlt className="-scale-x-100 rotate-90" />} title="TELEFONES">
                    <p>Telef: {store.phone}</p>
                </InfoBlock>
                <div className={spaced ? "pt-[23px]" : ""}>
                    <InfoBlock icon={<FaEnvelope />} title="E-MAIL">
                        <p>{store.email}</p>
                    </InfoBlock>
                </div>
            </div>
            {children}
        </div>
    );
}

const fieldClass = "block w-full border-2 border-[#bebebe] bg-white px-2 text-sm outline-none focus:border-[#50ad45]";
const labelClass = "mb-[5px] block text-[13px] leading-[18px] font-semibold text-black";

function ContactForm() {
    return (
        <form onSubmit={(e) => e.preventDefault()}>
            <h1 className="mb-7 text-3xl leading-[38px] font-bold">CONTACTE-NOS</h1>
            <div className="flex flex-col gap-[15px]">
                <div>
                    <label htmlFor="nome" className={labelClass}>NOME*</label>
                    <div className="relative">
                        <input id="nome" type="text" className={`${fieldClass} h-[34px]`} />
                        <svg className="absolute top-[9px] right-4 h-4 w-3" viewBox="0 0 12 16" fill="none" stroke="#8c8c8c" aria-hidden="true">
                            <rect x="1" y="1" width="10" height="14" rx="1" strokeWidth="1.500" />
                            <path d="M6 3.500v4M4.500 7.500h3M4 10h4M4 12h4" strokeWidth="1.500" />
                        </svg>
                    </div>
                </div>
                <div className="grid grid-cols-2 gap-[30px]">
                    <div>
                        <label htmlFor="email" className={labelClass}>E-MAIL*</label>
                        <input id="email" type="email" className={`${fieldClass} h-[34px]`} />
                    </div>
                    <div>
                        <label htmlFor="telefone" className={labelClass}>TELEFONE</label>
                        <input id="telefone" type="tel" className={`${fieldClass} h-[34px]`} />
                    </div>
                </div>
                <div>
                    <label htmlFor="assunto" className={labelClass}>ASSUNTO*</label>
                    <input id="assunto" type="text" className={`${fieldClass} h-[34px]`} />
                </div>
                <div>
                    <label htmlFor="mensagem" className={labelClass}>MENSAGEM*</label>
                    <textarea id="mensagem" className={`${fieldClass} h-[88px] resize-none`} />
                </div>
            </div>
            <div className="mt-[33px] flex justify-end">
                <button type="submit" className="h-11 w-[181px] bg-black text-base font-bold text-white">
                    ENVIAR
                </button>
            </div>
        </form>
    );
}

function VisagricolaLogo() {
    return (
        <svg width="200" height="42" viewBox="0 0 200 42" role="img" aria-label="Visagricola">
            <g fill="#365fb0">
                <path d="M12 2C4 6 0 13 0 21c0 10 5 17 13 20 3 0 4-4 3-8 0-4-4-6-5-10L9 12l-2 2-1 8C3 15 6 7 12 2z" />
                <path d="M30 2c8 4 12 11 12 19 0 10-5 17-13 20-3 0-4-4-3-8 0-4 4-6 5-10l2-11 2 2 1 8c3-7 0-15-6-20z" />
                <path d="M14 17c3-3 5-1 7 0s4 1 6-1c-2 4-11 4-13 1z" />
            </g>
            <g fill="#4fa23f">
                <circle cx="21" cy="4" r="3" fill="none" stroke="#4fa23f" strokeWidth="3" />
                <path d="M20 7h2v9h-2zM8 10c4-2 9-2 11 3-4 0-8 1-11-3zM34 10c-4-2-9-2-11 3 4 0 8 1 11-3zM20 36h2l1 5h-4z" />
            </g>
            <g fill="#ec2f6f">
                <circle cx="16" cy="21" r="2.500" />
                <circle cx="21" cy="21" r="2.500" />
                <circle cx="26" cy="21" r="2.500" />
                <circle cx="18" cy="27" r="2.500" />
                <circle cx="24" cy="27" r="2.500" />
                <circle cx="21" cy="33" r="2.500" />
            </g>
            <text x="48" y="27" fontFamily="Lato, sans-serif" fontWeight="300" fontSize="24" fill="#4fa23f">
                VISAGRICOLA
            </text>
            <path d="M48 30h152" stroke="#4fa23f" strokeWidth="1.500" />
            <path d="M48 33h152" stroke="#365fb0" strokeWidth="1.500" />
            <text x="48" y="41" fontFamily="DejaVu Sans, sans-serif" fontWeight="700" fontSize="9" fill="#4fa23f">
                PRODUTOS AGRICOLAS, S.A.
            </text>
        </svg>
    );
}

const features = [
    { title: "Pagamentos Seguros", text: "A Nossa Loja 100% Segura!", bg: "bg-[#e5e5e5]" },
    { title: "Entregas em 48H", text: "Encomendas sua casa com rapidez", bg: "bg-[#d9d9d9]" },
    { title: "Trocas e Devoluções", text: "30 dias em qualquer compra", bg: "bg-[#dfdfdf]" },
    { title: "Loja Oficial", text: "Artigos 100% autênticos e com garantia da marca", bg: "bg-[#e5e5e5]" },
];

const footerColumns = [
    {
        title: "Campocheio",
        links: ["Sobre Nós", "Serviços", "Folhetos", "Cartão Cliente", "Notícias", "Contactos", "Livro de Reclamações"],
    },
    {
        title: "Condições Gerais de Utilização",
        links: [
            "Termos e Condições Gerais",
            "Informação Sobre Produtos e Conteúdos",
            "Trocas e Devoluções Online",
            "Garantia e Pós Venda",
            "Política de Privacidade",
        ],
    },
    { title: "Produtos", links: ["Agricultura", "Pecuária", "Jardim", "Bricolage", "Casa E Utilidades"] },
];

function RoundLink({ label, children }: { label: string; children: ReactNode }) {
    return (
        <a
            href="#"
            aria-label={label}
            className="flex size-[34px] items-center justify-center rounded-full border-2 border-[#999] text-[17px] text-[#50ad45]"
        >
            {children}
        </a>
    );
}

function PaymentLogos() {
    return (
        <>
            <svg className="mt-[39px] ml-[3px]" width="228" height="50" viewBox="0 0 228 50" role="img" aria-label="easypay, Visa, Mastercard">
                <rect x="1" y="1" width="226" height="48" rx="6" fill="none" stroke="#d0d0d0" strokeWidth="2" />
                <text x="13" y="32" fontFamily="Open Sans, sans-serif" fontSize="26" fontWeight="700">
                    <tspan fill="#1677ff">easy</tspan>
                    <tspan fill="#5e5a70">pay</tspan>
                </text>
                <circle cx="24" cy="31" r="2.500" fill="#ff2fd0" />
                <text x="136" y="32" fontFamily="Open Sans, sans-serif" fontSize="19" fontWeight="800" fontStyle="italic" fill="#1a2170">
                    VISA
                </text>
                <circle cx="195" cy="25" r="7" fill="#e3131b" />
                <circle cx="204" cy="25" r="7" fill="#f79e1b" />
                <path d="M199.500 19.500a7 7 0 0 1 0 11 7 7 0 0 1 0-11z" fill="#ee6a12" />
            </svg>
            <svg className="mt-7" width="68" height="30" viewBox="0 0 68 30" role="img" aria-label="MB Way">
                <path d="M4 5V3q0-2 2-2h23q2 0 2 2v2M1 25v2q0 2 2 2h29q2 0 2-2v-2" fill="none" stroke="#f6200c" strokeWidth="2" />
                <text x="0" y="22" fontFamily="Open Sans, sans-serif" fontSize="20" fontWeight="600" fill="#111">
                    MB
                </text>
                <text x="39" y="19" fontFamily="Open Sans, sans-serif" fontSize="13" fontWeight="600" fill="#222">
                    WAY
                </text>
            </svg>
        </>
    );
}

function SiteFooter() {
    return (
        <footer>
            <div className="bg-[#e5e5e5]">
                <div className="mx-auto grid max-w-[1140px] grid-cols-4 text-center">
                    {features.map((f) => (
                        <div key={f.title} className={`px-4 pt-6 pb-[19px] ${f.bg}`}>
                            <h3 className="text-lg leading-5 font-semibold">{f.title}</h3>
                            <p className="mx-auto mt-[5px] max-w-[250px] text-[15px] leading-[15px]">{f.text}</p>
                        </div>
                    ))}
                </div>
            </div>
            <div className="bg-[#f3f3f3]">
                <div className="mx-auto grid max-w-[1140px] grid-cols-[467fr_467fr_467fr_407fr_472fr] pt-10 pb-[25px] text-sm leading-7">
                    <div className="pr-12">
                        <h4 className="font-semibold">Onde Estamos</h4>
                        {["Loja de Viseu", "Loja de Famalicão"].map((label) => (
                            <a key={label} href="#" className="flex items-center gap-[3px] text-[#50ad45]">
                                <FaMapMarkerAlt className="w-[11px]" />
                                {label}
                            </a>
                        ))}
                        <p>Das 9h00 às 20h00, de Segunda a Sábado.</p>
                        <p>Feriados incluídos.</p>
                        <a href="#" className="text-[#50ad45]">Contingência Covid 19</a>
                    </div>
                    {footerColumns.map((col) => (
                        <div key={col.title} className={col.title === "Produtos" ? "" : "pr-12"}>
                            <h4 className="font-semibold">{col.title}</h4>
                            <ul>
                                {col.links.map((link) => (
                                    <li key={link}>
                                        <a href="#" className="text-[#50ad45]">{link}</a>
                                    </li>
                                ))}
                            </ul>
                        </div>
                    ))}
                    <div>
                        <h4 className="leading-6 font-semibold">Redes Sociais</h4>
                        <div className="mt-[19px] flex gap-[7px]">
                            <RoundLink label="Facebook"><FaFacebookF /></RoundLink>
                            <RoundLink label="Instagram"><FaInstagram /></RoundLink>
                            <RoundLink label="Twitter"><FaTwitter /></RoundLink>
                            <RoundLink label="YouTube"><FaYoutube /></RoundLink>
                            <RoundLink label="Blog"><Disc className="size-[17px]" /></RoundLink>
                        </div>
                        <PaymentLogos />
                    </div>
                </div>
            </div>
            <div className="mx-auto max-w-[1140px] pt-[23px] pb-6 text-xs leading-[18px]">
                Campocheio Todos os direitos reservados 2021.
            </div>
        </footer>
    );
}

function RecaptchaBadge() {
    return (
        <div className="absolute right-0 bottom-3.5 z-30 flex w-[70px] flex-col items-center rounded-l-sm bg-[#f9f9f9] pt-1.5 pb-0.5 shadow-[0_0_5px_#808080]">
            <svg width="38" height="38" viewBox="0 0 64 64" aria-hidden="true">
                <path fill="#1c3aa9" d="M64 31.955l-.033-1.370V4.687l-7.160 7.160C50.948 4.674 42.033.093 32.050.093c-10.400 0-19.622 4.960-25.458 12.640l11.736 11.860a15.550 15.550 0 0 1 4.754-5.334c2.050-1.600 4.952-2.906 8.968-2.906.485 0 .860.057 1.135.163 4.976.393 9.288 3.140 11.828 7.124l-8.307 8.307L64 31.953" />
                <path fill="#4a8df6" d="M31.862.094l-1.370.033H4.594l7.160 7.160C4.580 13.147 0 22.060 0 32.046c0 10.400 4.960 19.622 12.640 25.458L24.500 45.768a15.550 15.550 0 0 1-5.334-4.754c-1.600-2.050-2.906-4.952-2.906-8.968 0-.485.057-.860.163-1.135.393-4.976 3.140-9.288 7.124-11.828l8.307 8.307L31.860.095" />
                <path fill="#b4b4b4" d="M.001 32.045l.033 1.370v25.898l7.160-7.160c5.860 7.173 14.774 11.754 24.760 11.754 10.400 0 19.622-4.960 25.458-12.640l-11.736-11.860a15.550 15.550 0 0 1-4.754 5.334c-2.050 1.600-4.952 2.906-8.968 2.906-.485 0-.860-.057-1.135-.163-4.976-.393-9.288-3.140-11.828-7.124l8.307-8.307c-10.522.040-22.400.066-27.295-.005" />
            </svg>
            <p className="mt-0.5 px-1 text-center font-[Roboto,sans-serif] text-[5px] leading-[7px] text-[#555]">
                <a href="#">Privacidade</a> - <a href="#">Termos de Utilização</a>
            </p>
        </div>
    );
}

export default function App() {
    return (
        <div className="relative bg-white font-['Open_Sans',sans-serif] text-[#262626]">
            <SiteHeader />
            <main>
                <StoreMap />
                <section className="mx-auto grid max-w-[1140px] grid-cols-[9fr_9fr_20fr] pt-[52px] pb-[63px]">
                    <StoreInfo store={stores[0]}>
                        <div className="mt-[65px] flex items-center gap-5 pl-2.5 text-[22px] text-[#50ad45]">
                            <a href="#" aria-label="Facebook"><FaFacebookF className="w-3" /></a>
                            <a href="#" aria-label="Twitter"><FaTwitter className="w-[21px]" /></a>
                            <a href="#" aria-label="Instagram"><FaInstagram className="w-5" /></a>
                            <a href="#" aria-label="YouTube"><FaYoutube className="w-6" /></a>
                            <a href="#" aria-label="Blog"><Disc className="size-[22px]" /></a>
                        </div>
                    </StoreInfo>
                    <StoreInfo store={stores[1]} spaced />
                    <ContactForm />
                </section>
                <section className="mb-[110px] flex flex-col items-center bg-[#eaeaea] pt-[50px] pb-12 text-sm leading-5">
                    <p className="mb-px">
                        CAMPOCHEIO® é uma marca registada da empresa{" "}
                        <a href="#" className="text-[#50ad45] underline">Visagricola</a>
                    </p>
                    <VisagricolaLogo />
                </section>
            </main>
            <SiteFooter />
            <RecaptchaBadge />
        </div>
    );
}
